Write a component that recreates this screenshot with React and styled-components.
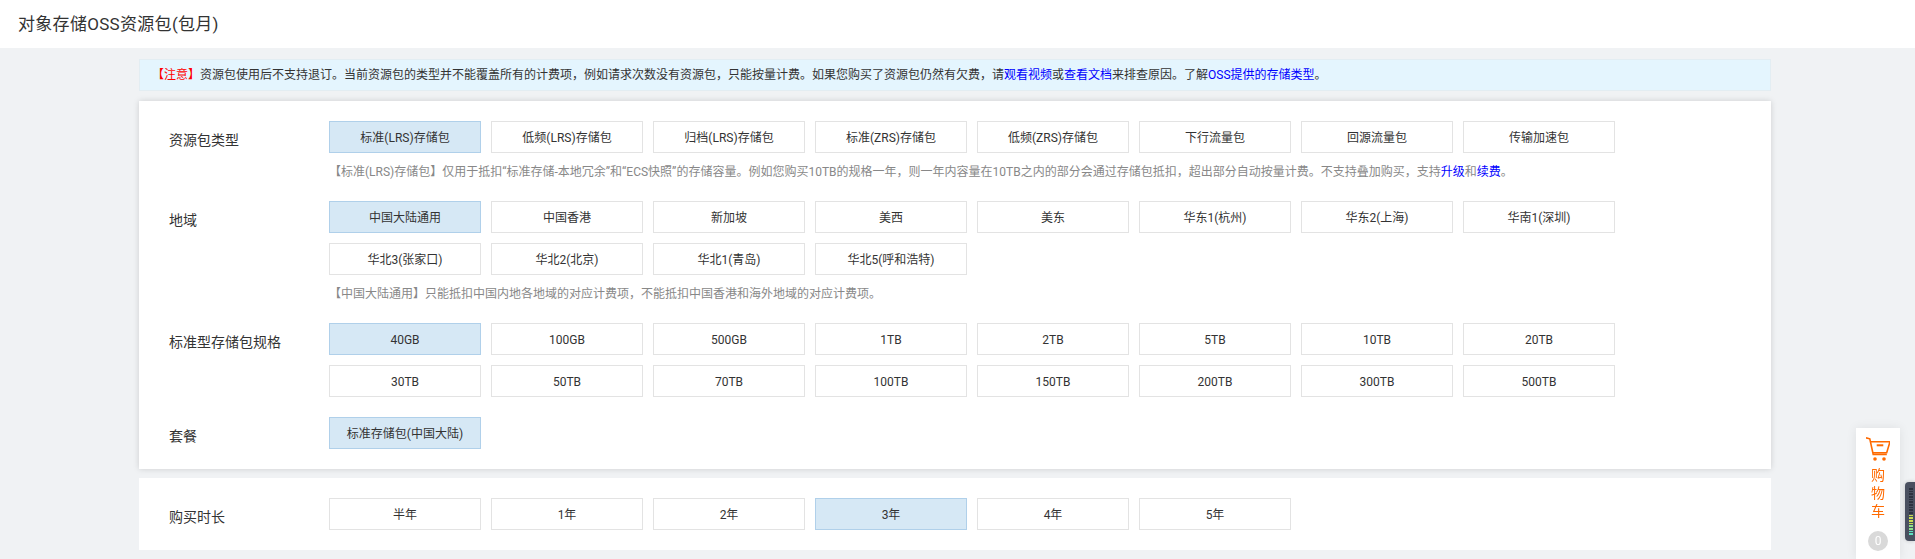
import React from "react";
import styled, { createGlobalStyle } from "styled-components";

const TYPES = ["标准(LRS)存储包", "低频(LRS)存储包", "归档(LRS)存储包", "标准(ZRS)存储包", "低频(ZRS)存储包", "下行流量包", "回源流量包", "传输加速包"];
const REGIONS = ["中国大陆通用", "中国香港", "新加坡", "美西", "美东", "华东1(杭州)", "华东2(上海)", "华南1(深圳)", "华北3(张家口)", "华北2(北京)", "华北1(青岛)", "华北5(呼和浩特)"];
const SIZES = ["40GB", "100GB", "500GB", "1TB", "2TB", "5TB", "10TB", "20TB", "30TB", "50TB", "70TB", "100TB", "150TB", "200TB", "300TB", "500TB"];
const YEARS = ["半年", "1年", "2年", "3年", "4年", "5年"];

const Options = ({ items, active }) => (
  <OptionGrid>
    {items.map((item) => (
      <Option key={item} $active={item === active}>{item}</Option>
    ))}
  </OptionGrid>
);

export default function App() {
  return (
    <>
      <GlobalStyle />
      <Header>对象存储OSS资源包(包月)</Header>
      <Main>
        <Notice>
          <Red>【注意】</Red>资源包使用后不支持退订。当前资源包的类型并不能覆盖所有的计费项，例如请求次数没有资源包，只能按量计费。如果您购买了资源包仍然有欠费，请<Link>观看视频</Link>或<Link>查看文档</Link>来排查原因。了解<Link>OSS提供的存储类型</Link>。
        </Notice>
        <Card $shadow>
          <Row>
            <Label>资源包类型</Label>
            <div>
              <Options items={TYPES} active="标准(LRS)存储包" />
              <Hint>【标准(LRS)存储包】仅用于抵扣“标准存储-本地冗余”和“ECS快照”的存储容量。例如您购买10TB的规格一年，则一年内容量在10TB之内的部分会通过存储包抵扣，超出部分自动按量计费。不支持叠加购买，支持<Link>升级</Link>和<Link>续费</Link>。</Hint>
            </div>
          </Row>
          <Row>
            <Label>地域</Label>
            <div>
              <Options items={REGIONS} active="中国大陆通用" />
              <Hint>【中国大陆通用】只能抵扣中国内地各地域的对应计费项，不能抵扣中国香港和海外地域的对应计费项。</Hint>
            </div>
          </Row>
          <Row>
            <Label>标准型存储包规格</Label>
            <Options items={SIZES} active="40GB" />
          </Row>
          <Row>
            <Label>套餐</Label>
            <Options items={["标准存储包(中国大陆)"]} active="标准存储包(中国大陆)" />
          </Row>
        </Card>
        <Card>
          <Row>
            <Label>购买时长</Label>
            <Options items={YEARS} active="3年" />
          </Row>
        </Card>
      </Main>
      <CartDock>
        <svg width="24" height="24" viewBox="0 0 24 24" fill="none" stroke="#ff6a00" strokeWidth="1.6">
          <path d="M0 .8l3.8 1L7.2 17.4h13.6" />
          <path d="M4.4 4.7H24l-3.3 11H7" />
          <path d="M10.7 8.3h6.6" strokeWidth="2" />
          <circle cx="9" cy="22" r="1.8" fill="#ff6a00" stroke="none" />
          <circle cx="18" cy="22" r="1.8" fill="#ff6a00" stroke="none" />
        </svg>
        <CartText>购物车</CartText>
        <CartCount>0</CartCount>
      </CartDock>
      <Meter>
        {Array.from({ length: 18 }, (_, i) => (
          <MeterBar key={i} $level={i} />
        ))}
      </Meter>
    </>
  );
}

const GlobalStyle = createGlobalStyle`
  html, body {
    margin: 0;
    height: 100%;
    overflow: hidden;
    background: #f0f2f4;
    font-family: Roboto, "Noto Sans CJK SC", sans-serif;
    color: #333;
  }
`;

const Header = styled.div`
  height: 48px;
  line-height: 48px;
  padding-left: 18px;
  background: #fff;
  font-size: 17px;
  letter-spacing: 0.3px;
  color: #333;
`;

const Main = styled.div`
  box-sizing: border-box;
  width: 1632px;
  margin-left: 139px;
  padding-top: 11px;
`;

const Notice = styled.div`
  box-sizing: border-box;
  height: 32px;
  line-height: 30px;
  padding-left: 12px;
  background: #e4f5fe;
  border: 1px solid #e3edf2;
  font-size: 12px;
  color: #333;
  white-space: nowrap;
`;

const Red = styled.span`
  color: #f00;
`;

const Link = styled.a`
  color: #00f;
`;

const Card = styled.div`
  margin-top: ${(p) => (p.$shadow ? "10px" : "9px")};
  padding: 20px 30px;
  background: #fff;
  box-shadow: ${(p) => (p.$shadow ? "0 0 6px rgba(0, 0, 0, 0.15)" : "none")};
`;

const Row = styled.div`
  display: flex;
  margin-bottom: 20px;
  &:last-child {
    margin-bottom: 0;
  }
`;

const Label = styled.div`
  flex: 0 0 160px;
  padding-top: 8px;
  line-height: 22px;
  font-size: 14px;
  color: #333;
`;

const OptionGrid = styled.div`
  display: grid;
  grid-template-columns: repeat(8, 152px);
  gap: 10px;
`;

const Option = styled.div`
  box-sizing: border-box;
  height: 32px;
  line-height: 32px;
  text-align: center;
  font-size: 12px;
  color: #333;
  background: ${(p) => (p.$active ? "#d6e8f5" : "#fff")};
  border: 1px solid ${(p) => (p.$active ? "#b0d0ea" : "#e3e3e3")};
`;

const Hint = styled.div`
  margin-top: 10px;
  line-height: 18px;
  font-size: 12px;
  color: #888;
  white-space: nowrap;
`;

const CartDock = styled.div`
  position: fixed;
  top: 428px;
  right: 15px;
  bottom: 0;
  width: 44px;
  box-sizing: border-box;
  padding-top: 9px;
  display: flex;
  flex-direction: column;
  align-items: center;
  background: #fff;
  box-shadow: 0 0 10px rgba(0, 0, 0, 0.08);
`;

const CartText = styled.div`
  width: 14px;
  margin-top: 5px;
  line-height: 18px;
  font-size: 14px;
  color: #ff6a00;
`;

const CartCount = styled.div`
  width: 20px;
  height: 20px;
  margin-top: 11px;
  border-radius: 50%;
  background: #d9d9d9;
  color: #fff;
  font-size: 12px;
  line-height: 20px;
  text-align: center;
`;

const Meter = styled.div`
  position: fixed;
  top: 482px;
  left: 1905px;
  width: 10px;
  height: 59px;
  box-sizing: border-box;
  padding: 6px 0 6px 4px;
  border-radius: 4px 0 0 4px;
  background: #4a5060;
  box-shadow: 0 0 4px rgba(0, 0, 0, 0.2);
  display: flex;
  flex-direction: column;
  justify-content: space-between;
`;

const meterColor = (level) => {
  if (level < 10) return "#2d3240";
  if (level < 14) return "#c8dc50";
  if (level < 16) return "#8fe08a";
  return "#5fe0c0";
};

const MeterBar = styled.div`
  width: 4px;
  height: 1.5px;
  background: ${(p) => meterColor(p.$level)};
`;
